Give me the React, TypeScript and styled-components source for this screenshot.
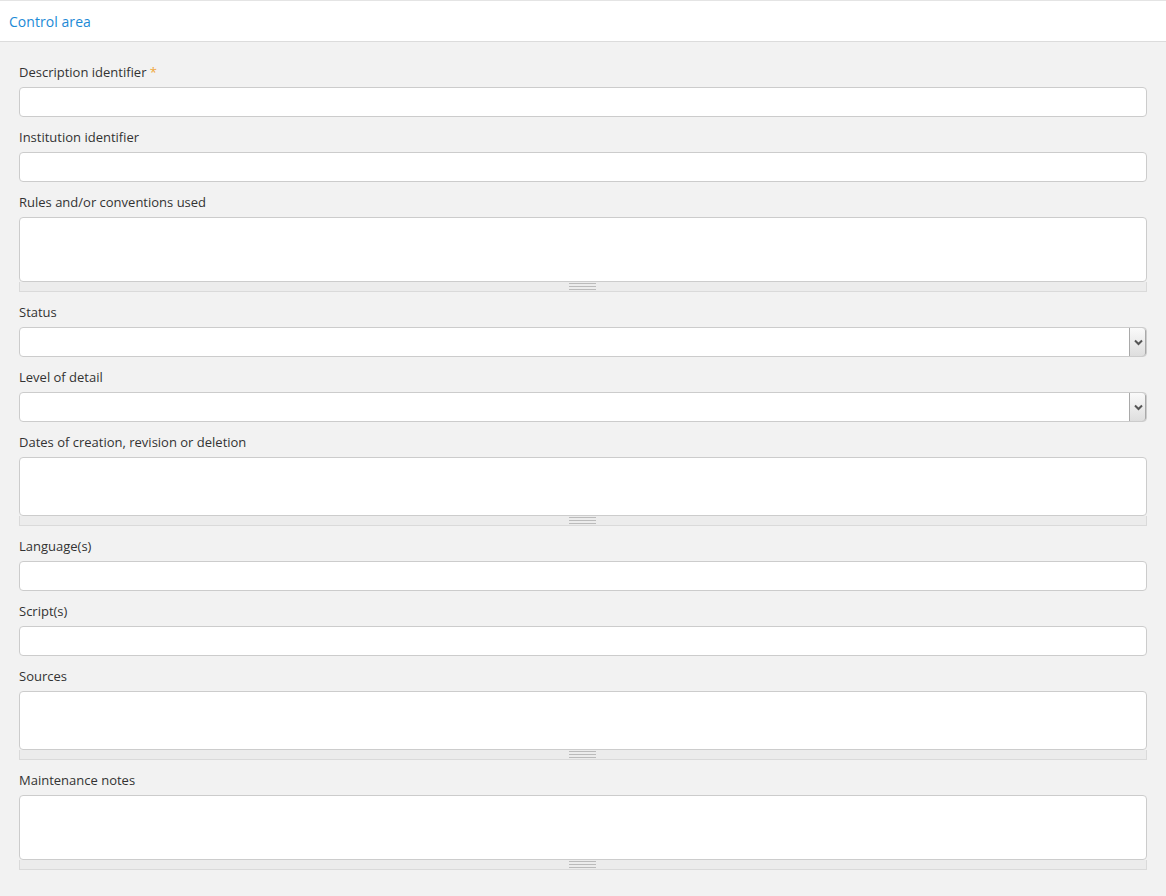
import { createGlobalStyle, styled } from "styled-components";

const GlobalStyle = createGlobalStyle`
  html, body {
    margin: 0;
    padding: 0;
    background: #f2f2f2;
    font-family: "Open Sans", "Liberation Sans", sans-serif;
  }
  * { box-sizing: border-box; }
`;

type TField =
  | { kind: "input"; label: string; required?: boolean }
  | { kind: "textarea"; label: string; rows: number }
  | { kind: "select"; label: string };

const fields: TField[] = [
  { kind: "input", label: "Description identifier", required: true },
  { kind: "input", label: "Institution identifier" },
  { kind: "textarea", label: "Rules and/or conventions used", rows: 65 },
  { kind: "select", label: "Status" },
  { kind: "select", label: "Level of detail" },
  { kind: "textarea", label: "Dates of creation, revision or deletion", rows: 59 },
  { kind: "input", label: "Language(s)" },
  { kind: "input", label: "Script(s)" },
  { kind: "textarea", label: "Sources", rows: 59 },
  { kind: "textarea", label: "Maintenance notes", rows: 65 },
];

const Page = styled.div`
  min-height: 896px;
  background: #f2f2f2;
  border-top: 1px solid #e4e4e4;
`;

const Header = styled.div`
  height: 41px;
  background: #fff;
  border-bottom: 1px solid #dcdcdc;
  display: flex;
  align-items: center;
  padding: 1px 9px 0 9px;
  font-size: 14px;
  letter-spacing: 0.05px;
  color: #1c8ad6;
`;

const Form = styled.form`
  padding: 20px 19px 0 19px;
  display: flex;
  flex-direction: column;
  gap: 10px;
`;

const Group = styled.div`
  display: flex;
  flex-direction: column;
`;

const Label = styled.label`
  font-size: 13px;
  line-height: 20px;
  color: #333;
  margin-bottom: 5px;
  span {
    color: #f0a63a;
  }
`;

const TextInput = styled.input`
  height: 30px;
  width: 100%;
  border: 1px solid #ccc;
  border-radius: 4px;
  background: #fff;
  font: 13px "Open Sans", sans-serif;
  padding: 4px 8px;
  outline: none;
`;

const Area = styled.textarea<{ $h: number }>`
  height: ${({ $h }) => $h}px;
  width: 100%;
  border: 1px solid #ccc;
  border-radius: 4px;
  background: #fff;
  font: 13px "Open Sans", sans-serif;
  padding: 4px 8px;
  resize: none;
  outline: none;
  display: block;
`;

const Grip = styled.div`
  height: 10px;
  background: #ececec;
  border: 1px solid #dadada;
  border-top: none;
  display: flex;
  align-items: center;
  justify-content: center;
  padding-right: 2px;
  &::after {
    content: "";
    width: 27px;
    height: 5px;
    border-top: 1px solid #bbb;
    border-bottom: 1px solid #bbb;
    background: linear-gradient(#bbb, #bbb) center / 100% 1px no-repeat;
  }
`;

const SelectBox = styled.div`
  height: 30px;
  display: flex;
  border: 1px solid #ccc;
  border-radius: 4px;
  background: #fff;
  overflow: hidden;
`;

const NativeSelect = styled.select`
  flex: 1;
  appearance: none;
  border: none;
  background: transparent;
  font: 13px "Open Sans", sans-serif;
  outline: none;
`;

const ArrowButton = styled.div`
  width: 17px;
  display: flex;
  align-items: center;
  justify-content: center;
  background: linear-gradient(#fafafa, #dedede);
  border-left: 1px solid #a9a9a9;
  border-radius: 0 3px 3px 0;
  box-shadow: inset -1px 0 0 #a9a9a9;
`;

const Field = ({ field }: { field: TField }) => (
  <Group>
    <Label>
      {field.label}
      {field.kind === "input" && field.required && <span> *</span>}
    </Label>
    {field.kind === "input" && <TextInput type="text" />}
    {field.kind === "textarea" && (
      <div>
        <Area $h={field.rows} />
        <Grip />
      </div>
    )}
    {field.kind === "select" && (
      <SelectBox>
        <NativeSelect>
          <option value=""></option>
        </NativeSelect>
        <ArrowButton>
          <svg width="9" height="7" viewBox="0 0 9 7">
            <path d="M1 1.5 L4.5 5 L8 1.5" fill="none" stroke="#555" strokeWidth="2" />
          </svg>
        </ArrowButton>
      </SelectBox>
    )}
  </Group>
);

export default function App() {
  return (
    <>
      <GlobalStyle />
      <Page>
        <Header>Control area</Header>
        <Form>
          {fields.map((f) => (
            <Field key={f.label} field={f} />
          ))}
        </Form>
      </Page>
    </>
  );
}
